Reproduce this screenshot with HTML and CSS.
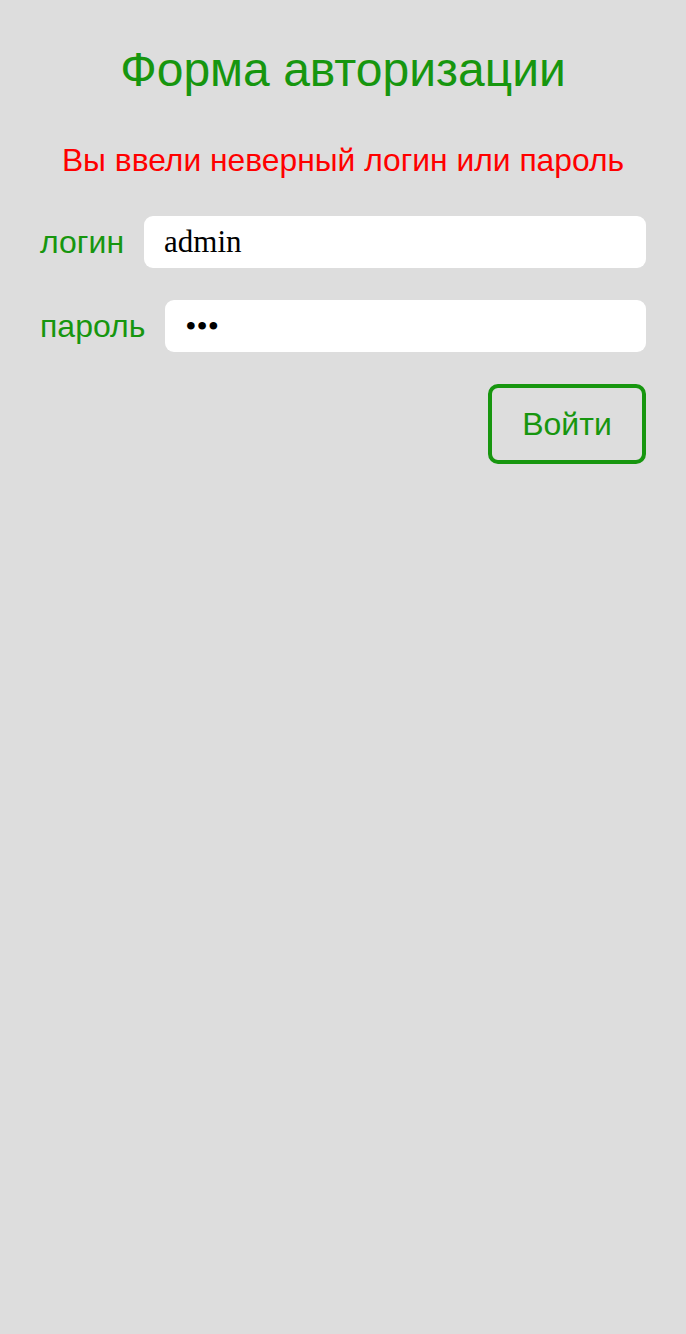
FILE: index.html
```html
<!DOCTYPE html>
<html lang="ru">
<head>
<meta charset="utf-8">
<link rel="stylesheet" href="styles.css">
</head>
<body>
<main class="page">
  <h1 class="title">Форма авторизации</h1>
  <p class="error">Вы ввели неверный логин или пароль</p>
  <form class="form">
    <label class="row">
      <span class="label">логин</span>
      <input class="field" type="text" value="admin">
    </label>
    <label class="row">
      <span class="label">пароль</span>
      <input class="field pass" type="password" value="123">
    </label>
    <div class="actions">
      <button class="btn" type="button">Войти</button>
    </div>
  </form>
</main>
</body>
</html>
```

FILE: styles.css
```css
html, body {
  margin: 0;
  padding: 0;
  background: #dddddd;
}
.page {
  padding: 40px 40px;
  font-family: "Liberation Sans Narrow", "Liberation Sans", Arial, sans-serif;
  color: #17960f;
  display: flex;
  flex-direction: column;
}
.title {
  margin: 0;
  text-align: center;
  font-weight: normal;
  font-size: 48px;
  line-height: 60px;
}
.error {
  margin: 40px 0 0;
  text-align: center;
  color: #ff0000;
  font-size: 31.8px;
  line-height: 40px;
}
.form {
  margin-top: 36px;
  display: flex;
  flex-direction: column;
  gap: 32px;
}
.row {
  display: flex;
  align-items: center;
  gap: 20px;
}
.label {
  font-size: 32px;
  line-height: 40px;
}
.field {
  flex: 1;
  min-width: 0;
  height: 52px;
  box-sizing: border-box;
  border: none;
  border-radius: 9px;
  background: #ffffff;
  padding: 0 20px;
  font-family: "Liberation Serif", "Times New Roman", serif;
  font-size: 31px;
  color: #000;
  outline: none;
}
.field.pass {
  font-size: 32px;
  letter-spacing: 0;
}
.actions {
  display: flex;
  justify-content: flex-end;
}
.btn {
  width: 158px;
  height: 80px;
  box-sizing: border-box;
  border: 4px solid #17960f;
  border-radius: 10px;
  background: transparent;
  color: #17960f;
  font-family: "Liberation Sans Narrow", "Liberation Sans", Arial, sans-serif;
  font-size: 32px;
  padding: 0;
}
```
